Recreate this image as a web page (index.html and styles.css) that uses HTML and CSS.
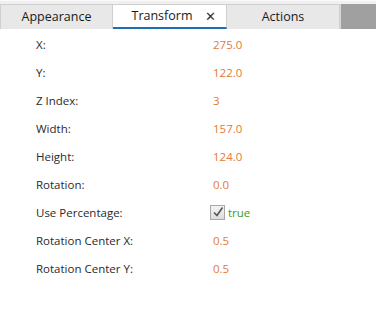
FILE: index.html
```html
<!DOCTYPE html>
<html>
<head>
<meta charset="utf-8">
<link rel="stylesheet" href="styles.css">
</head>
<body>
<div class="tabbar">
  <div class="tab">Appearance</div>
  <div class="tab active"><span class="title">Transform</span><span class="close">✕</span></div>
  <div class="tab">Actions</div>
  <div class="filler"></div>
</div>
<div class="props">
  <div class="row"><span class="label">X:</span><span class="val">275.0</span></div>
  <div class="row"><span class="label">Y:</span><span class="val">122.0</span></div>
  <div class="row"><span class="label">Z Index:</span><span class="val">3</span></div>
  <div class="row"><span class="label">Width:</span><span class="val">157.0</span></div>
  <div class="row"><span class="label">Height:</span><span class="val">124.0</span></div>
  <div class="row"><span class="label">Rotation:</span><span class="val">0.0</span></div>
  <div class="row"><span class="label">Use Percentage:</span><span class="val bool"><span class="check"><svg width="12" height="12" viewBox="0 0 12 12"><path d="M2 6.5 L5 9.5 L10.5 1.5" fill="none" stroke="#555" stroke-width="1.6"/></svg></span><span class="true">true</span></span></div>
  <div class="row"><span class="label">Rotation Center X:</span><span class="val">0.5</span></div>
  <div class="row"><span class="label">Rotation Center Y:</span><span class="val">0.5</span></div>
</div>
</body>
</html>
```
FILE: styles.css
```css
html, body { margin: 0; padding: 0; background: #fff; }
body { font-family: "Open Sans", "Noto Sans", sans-serif; width: 376px; height: 321px; overflow: hidden; }
.tabbar {
  display: flex;
  height: 29px;
  padding-top: 3px;
  box-sizing: border-box;
  background: #f0f0f0;
  border-top: 1px solid #fafafa;
}
.tab {
  width: 113px;
  flex: none;
  display: flex;
  align-items: center;
  justify-content: center;
  font-size: 12.5px;
  color: #1a1a1a;
  background: #e8e8e8;
  border: 1px solid #cfcfcf;
  border-bottom: none;
  box-sizing: border-box;
  padding-bottom: 1px;
}
.tab + .tab { border-left: none; }
.tab.active {
  background: #fff;
  border-bottom: 2px solid #1f6fb4;
  width: 114px;
}
.title { margin-left: 9px; }
.close { font-size: 13px; margin-left: 13px; color: #333; }
.filler { flex: 1; background: #a0a0a0; border-left: 1px solid #d8d8d8; }
.props { padding-top: 1px; }
.row {
  display: flex;
  align-items: center;
  height: 28px;
  font-size: 11.5px;
}
.label { width: 177px; padding-left: 36px; color: #2a2a2a; flex: none; }
.val { color: #e07b39; }
.bool { display: flex; align-items: center; margin-left: -3px; }
.check {
  width: 13px; height: 13px;
  border: 1px solid #a8a8a8;
  background: linear-gradient(#f4f4f4, #dcdcdc);
  display: flex; align-items: center; justify-content: center;
  margin-right: 3px;
}
.true { color: #3d9a1c; }
```
